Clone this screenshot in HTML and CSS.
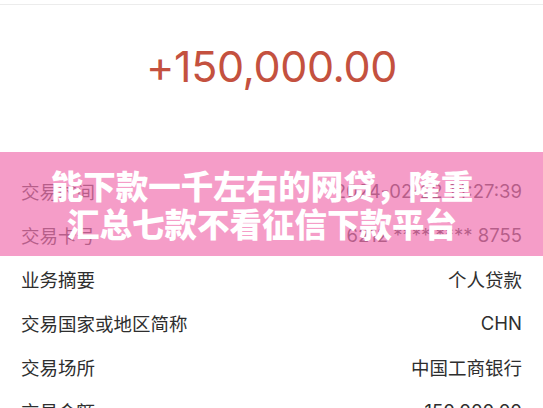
FILE: index.html
```html
<!DOCTYPE html>
<html lang="zh-CN">
<head>
    <meta charset="UTF-8">
    <meta name="viewport" content="width=device-width, initial-scale=1.0">
    <title>交易详情</title>
    <link rel="stylesheet" href="styles.css">
</head>
<body>
    <div class="page">
        <div class="topbar"></div>

        <div class="amount">+150,000.00</div>

        <div class="details">
            <div class="row"><span class="label">交易时间</span><span class="value">2024-02-22 14:27:39</span></div>
            <div class="row"><span class="label">交易卡号</span><span class="value">6212 **** **** 8755</span></div>
            <div class="row"><span class="label">业务摘要</span><span class="value">个人贷款</span></div>
            <div class="row"><span class="label">交易国家或地区简称</span><span class="value">CHN</span></div>
            <div class="row"><span class="label">交易场所</span><span class="value">中国工商银行</span></div>
            <div class="row"><span class="label">交易金额</span><span class="value">150,000.00</span></div>
        </div>

        <!-- title banner laid over the screenshot -->
        <div class="banner">
            <h1>能下款一千左右的网贷，隆重<br>汇总七款不看征信下款平台</h1>
        </div>
    </div>
</body>
</html>
```

FILE: styles.css
```css
/* General Styles */
body {
    margin: 0;
    background: #fff;
    font-family: "Inter", "Noto Sans CJK SC", sans-serif;
    color: #333;
    overflow: hidden;
}

.page {
    position: relative;
    width: 543px;
    height: 408px;
    overflow: hidden;
}

.topbar {
    height: 4px;
    border-bottom: 1px solid #ececec;
}

/* Amount */
.amount {
    height: 166px;
    padding-top: 40px;
    box-sizing: border-box;
    text-align: center;
    font-size: 43px;
    line-height: 43px;
    color: #c4513f;
    letter-spacing: -0.4px;
}

/* Detail rows */
.details {
    margin-top: -2px;
}

.row {
    display: flex;
    justify-content: space-between;
    align-items: center;
    height: 44px;
    padding: 0 21px 0 21px;
    font-size: 18.5px;
}

.label,
.value {
    color: #2e2e2e;
}

/* Banner */
.banner {
    position: absolute;
    left: 0;
    right: 0;
    top: 152px;
    height: 104px;
    background: rgba(241, 116, 176, 0.7);
    display: flex;
    align-items: center;
    justify-content: center;
}

.banner h1 {
    margin: 0;
    padding-right: 19px;
    text-align: center;
    color: #fff;
    font-family: "Noto Sans CJK SC", sans-serif;
    font-weight: 900;
    font-size: 32.5px;
    line-height: 38px;
}
```
